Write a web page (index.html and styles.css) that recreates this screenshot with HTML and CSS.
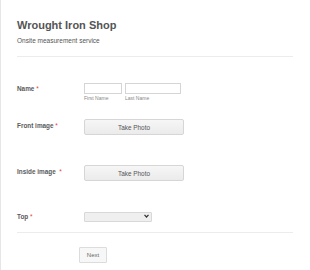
FILE: index.html
```html
<!DOCTYPE html>
<html lang="en">
<head>
    <meta charset="UTF-8">
    <title>Wrought Iron Shop</title>
    <link rel="stylesheet" href="styles.css">
</head>
<body>
    <div class="container">
        <div class="header">
            <h1>Wrought Iron Shop</h1>
            <p>Onsite measurement service</p>
        </div>
        <form class="form">
            <div class="row row-name">
                <label class="label">Name <span class="req">*</span></label>
                <div class="field">
                    <div class="name-part">
                        <input type="text" class="input input-first">
                        <span class="sub">First Name</span>
                    </div>
                    <div class="name-part">
                        <input type="text" class="input input-last">
                        <span class="sub">Last Name</span>
                    </div>
                </div>
            </div>
            <div class="row row-front">
                <label class="label">Front image <span class="req">*</span></label>
                <div class="field">
                    <button type="button" class="photo-btn">Take Photo</button>
                </div>
            </div>
            <div class="row row-inside">
                <label class="label">Inside image &nbsp;<span class="req">*</span></label>
                <div class="field">
                    <button type="button" class="photo-btn">Take Photo</button>
                </div>
            </div>
            <div class="row row-top">
                <label class="label">Top <span class="req">*</span></label>
                <div class="field">
                    <div class="select-wrap">
                        <select class="select"><option></option></select>
                        <svg class="chevron" width="5" height="4" viewBox="0 0 5 4"><path d="M0.5 0.8 L2.5 3 L4.5 0.8" fill="none" stroke="#333" stroke-width="1.2"/></svg>
                    </div>
                </div>
            </div>
            <div class="actions">
                <button type="button" class="next-btn">Next</button>
            </div>
        </form>
    </div>
</body>
</html>
```

FILE: styles.css
```css
body {
    margin: 0;
    background: #fff;
    font-family: 'Liberation Sans', Arial, sans-serif;
    color: #555;
}

.container {
    border-left: 1px solid #e6e6e6;
    height: 270px;
    box-sizing: border-box;
    padding: 0 17px 0 16px;
}

.header {
    padding-top: 17px;
    border-bottom: 1px solid #ececec;
    height: 39px;
}

h1 {
    margin: 0;
    font-size: 11px;
    line-height: 16px;
    font-weight: 700;
    color: #555;
}

.header p {
    margin: 4px 0 0;
    font-size: 6.5px;
    line-height: 8px;
    color: #555;
}

.row {
    display: flex;
}

.label {
    width: 67px;
    flex: none;
    font-size: 6.4px;
    font-weight: 700;
    line-height: 10px;
    padding-top: 1px;
    color: #5a5a5a;
}

.req {
    color: #e0443a;
    font-weight: 400;
}

.row-name { margin-top: 26px; }
.row-front { margin-top: 17px; }
.row-inside { margin-top: 30px; }
.row-top { margin-top: 30px; }

.row-front .label,
.row-inside .label { padding-top: 2px; }

.field {
    display: flex;
    gap: 3px;
}

.name-part {
    display: flex;
    flex-direction: column;
}

.input {
    box-sizing: border-box;
    height: 11px;
    border: 1px solid #d5d5d5;
    margin: 0;
    padding: 0;
    background: #fff;
}

.input-first { width: 38px; }
.input-last { width: 56px; }

.sub {
    font-size: 5px;
    line-height: 8px;
    color: #888;
}

.photo-btn {
    box-sizing: border-box;
    width: 100px;
    height: 16px;
    margin: 0;
    padding: 0;
    border: 1px solid #d6d6d6;
    border-radius: 2px;
    background: linear-gradient(#f6f6f6, #ebebeb);
    font-family: 'Liberation Sans', Arial, sans-serif;
    font-size: 6.4px;
    color: #555;
}

.select-wrap {
    position: relative;
    width: 68px;
    height: 10px;
}

.select {
    appearance: none;
    box-sizing: border-box;
    width: 68px;
    height: 10px;
    margin: 0;
    padding: 0;
    border: 1px solid #d8d8d8;
    border-radius: 1px;
    background: #efefef;
}

.chevron {
    position: absolute;
    right: 3px;
    top: 3px;
}

.actions {
    margin-top: 10px;
    border-top: 1px solid #ececec;
    padding: 10px 0 0 62px;
}

.next-btn {
    box-sizing: border-box;
    width: 28px;
    height: 16px;
    margin: 0;
    padding: 0;
    border: 1px solid #dcdcdc;
    border-radius: 1px;
    background: #f7f7f7;
    font-family: 'Liberation Sans', Arial, sans-serif;
    font-size: 6px;
    color: #666;
}
```
